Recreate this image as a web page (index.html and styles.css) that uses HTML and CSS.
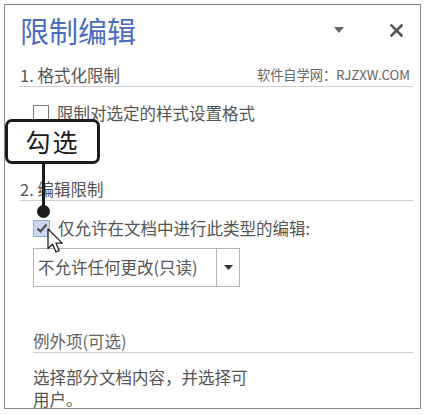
FILE: index.html
```html
<!DOCTYPE html>
<html lang="zh">
<head>
<meta charset="utf-8">
<link rel="stylesheet" href="styles.css">
</head>
<body>
<div class="panel">
  <div class="header">
    <div class="title">限制编辑</div>
    <svg class="hdr-arrow" width="10" height="6" viewBox="0 0 10 6"><path d="M0 0H10L5 6Z" fill="#666"/></svg>
    <svg class="hdr-close" width="13" height="13" viewBox="0 0 13 13"><path d="M1.5 1.5L11.5 11.5M11.5 1.5L1.5 11.5" stroke="#555" stroke-width="2.6" stroke-linecap="square"/></svg>
  </div>

  <div class="sec-head first">
    <span>1. 格式化限制</span>
    <span class="site">软件自学网：RJZXW.COM</span>
  </div>

  <div class="check-row row1">
    <span class="box"></span>
    <span>限制对选定的样式设置格式</span>
  </div>

  <div class="sec-head second">
    <span>2. 编辑限制</span>
  </div>

  <div class="check-row row2">
    <span class="box checked">
      <svg width="14" height="14" viewBox="0 0 14 14"><path d="M2.5 7.5L5.5 10.5L11.5 3.5" fill="none" stroke="#4d4d4d" stroke-width="2"/></svg>
    </span>
    <span>仅允许在文档中进行此类型的编辑:</span>
  </div>

  <div class="select">
    <span class="select-text">不允许任何更改(只读)</span>
    <span class="select-btn"><svg width="9" height="5" viewBox="0 0 9 5"><path d="M0 0H9L4.5 5Z" fill="#333"/></svg></span>
  </div>

  <div class="sub-head">例外项(可选)</div>

  <div class="desc">选择部分文档内容，并选择可<br>用户。</div>

  <div class="callout">勾选</div>
  <div class="leader"></div>
  <div class="dot"></div>
  <svg class="cursor" width="17" height="26" viewBox="0 0 17 26"><path d="M1 1V20.5L5.6 16.2L9 24L12.2 22.6L8.9 15.1H15.2Z" fill="#fff" stroke="#222" stroke-width="1.3" stroke-linejoin="round"/></svg>
</div>
</body>
</html>
```

FILE: styles.css
```css
html, body {
  margin: 0;
  padding: 0;
  background: #fff;
}
body {
  font-family: "Noto Sans CJK SC", "Noto Sans", sans-serif;
  color: #555;
}
.panel {
  position: relative;
  margin: 4px 0 0 4px;
  width: 415px;
  height: 403px;
  border: 1px solid #8a8a8a;
  overflow: hidden;
}
.header {
  display: flex;
  align-items: center;
  height: 50px;
  padding: 0 17px 0 15px;
}
.title {
  flex: 1;
  font-size: 29px;
  line-height: 36px;
  color: #4b6dbf;
}
.hdr-arrow {
  margin-right: 46px;
}
.sec-head {
  display: flex;
  justify-content: space-between;
  align-items: center;
  margin: 0 7px 0 15px;
  height: 22px;
  border-bottom: 1px solid #cfcfcf;
  font-size: 16.5px;
  line-height: 22px;
}
.sec-head.first {
  margin-top: 9px;
}
.sec-head.second {
  margin-top: 54px;
}
.site {
  font-size: 13.2px;
  color: #666;
  margin-right: 3px;
}
.check-row {
  display: flex;
  align-items: center;
  gap: 8px;
  margin-left: 28px;
  height: 22px;
  font-size: 16.5px;
  line-height: 22px;
  color: #555;
}
.row1 {
  margin-top: 15px;
}
.row2 {
  margin-top: 16px;
}
.box {
  width: 14px;
  height: 14px;
  border: 1px solid #7a7a7a;
  background: #fff;
  display: flex;
  align-items: center;
  justify-content: center;
}
.box.checked {
  width: 15px;
  height: 15px;
  background: #c8d7ee;
  border-color: #97acd0;
}
.select {
  display: flex;
  margin: 9px 0 0 28px;
  width: 207px;
  height: 39px;
  box-sizing: border-box;
  border: 1px solid #b5b5b5;
}
.select-text {
  flex: 1;
  padding-left: 4px;
  font-size: 16.5px;
  line-height: 37px;
  color: #555;
}
.select-btn {
  width: 22px;
  border-left: 1px solid #b5b5b5;
  display: flex;
  align-items: center;
  justify-content: center;
}
.sub-head {
  margin: 44px 7px 0 28px;
  height: 21px;
  line-height: 21px;
  border-bottom: 1px solid #cfcfcf;
  font-size: 16.5px;
  color: #666;
}
.desc {
  margin: 13px 0 0 28px;
  font-size: 16.5px;
  line-height: 22px;
  color: #555;
}
.callout {
  position: absolute;
  left: 0;
  top: 114px;
  width: 95px;
  height: 45px;
  box-sizing: border-box;
  border: 3px solid #1c1c1c;
  border-radius: 7px;
  background: #fff;
  color: #1a1a1a;
  font-size: 25px;
  line-height: 39px;
  letter-spacing: 2px;
  text-align: center;
}
.leader {
  position: absolute;
  left: 37px;
  top: 159px;
  width: 3px;
  height: 48px;
  background: #1c1c1c;
}
.dot {
  position: absolute;
  left: 32px;
  top: 200px;
  width: 13px;
  height: 13px;
  border-radius: 50%;
  background: #1c1c1c;
}
.cursor {
  position: absolute;
  left: 42px;
  top: 223px;
}
```
